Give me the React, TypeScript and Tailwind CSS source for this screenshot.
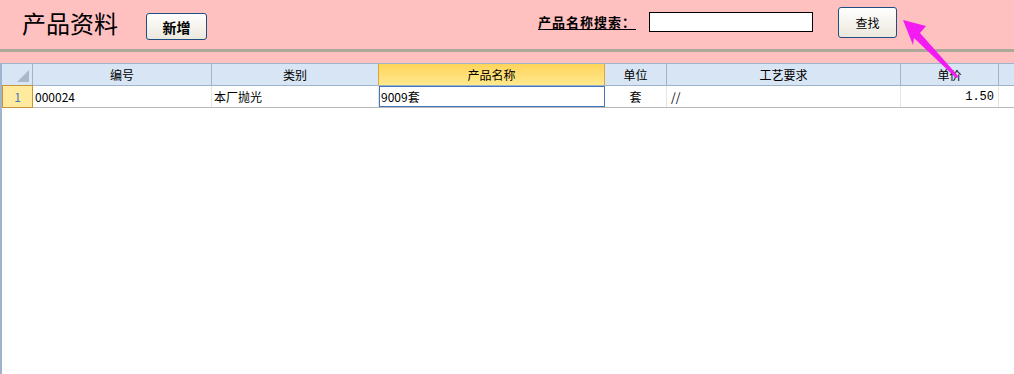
import React from "react";

const cols = [
  { name: "编号", w: 179 },
  { name: "类别", w: 167 },
  { name: "产品名称", w: 226, active: true },
  { name: "单位", w: 62 },
  { name: "工艺要求", w: 234 },
  { name: "单价", w: 98 },
];

export default function App() {
  const font = { fontFamily: '"Noto Sans CJK SC", "Liberation Sans", sans-serif' };
  return (
    <div className="relative w-[1014px] h-[374px] overflow-hidden bg-white" style={font}>
      {/* top pink area */}
      <div className="bg-[#ffc0c0]">
        <div className="h-[49px] flex items-start">
          <div className="ml-[22px] mt-[9px] w-[96px] shrink-0 text-[24px] leading-[28px] text-black">产品资料</div>
          <button className="ml-[28px] mt-[13px] w-[61px] h-[27px] shrink-0 rounded-[3px] border border-[#1f4f82] bg-gradient-to-b from-white to-[#ebe8dc] text-[14px] font-bold leading-none text-black">
            新增
          </button>
          <div className="ml-[331px] mt-[13px] w-[105px] shrink-0 text-[13px] font-bold underline underline-offset-2 text-black leading-[18px] tracking-[1px]">产品名称搜索：</div>
          <div className="ml-[6px] mt-[12px] w-[164px] h-[20px] shrink-0 bg-white border border-black" />
          <button className="ml-[25px] mt-[7px] w-[59px] h-[31px] shrink-0 rounded-[3px] border border-[#1f4f82] bg-gradient-to-b from-white to-[#ebe8dc] text-[12px] leading-none text-black">
            查找
          </button>
        </div>
        <div className="h-[3px] bg-[#aca79a]" />
        <div className="h-[11px]" />
      </div>

      {/* grid */}
      <div className="border-l-2 border-[#9fb3cb] h-[311px]">
        {/* header row */}
        <div className="flex h-[23px] bg-[#d7e5f4] border-t border-b border-[#9fb3cb]">
          <div className="relative w-[31px] shrink-0 border-r border-[#9fb3cb]">
            <div className="absolute right-[3px] bottom-[3px] w-0 h-0 border-l-[12px] border-l-transparent border-b-[12px] border-b-[#a9b8cb]" />
          </div>
          {cols.map((c) =>
            c.active ? (
              <div
                key={c.name}
                className="shrink-0 flex items-center justify-center text-[12px] text-black bg-gradient-to-b from-[#ffd45a] to-[#ffe98c] border-r border-l border-[#e0a43c] -ml-px"
                style={{ width: c.w + 1 }}
              >
                {c.name}
              </div>
            ) : (
              <div
                key={c.name}
                className="shrink-0 flex items-center justify-center text-[12px] text-black border-r border-[#9fb3cb]"
                style={{ width: c.w }}
              >
                {c.name}
              </div>
            )
          )}
          <div className="flex-1" />
        </div>
        {/* data row */}
        <div className="flex h-[22px] border-b border-[#b9b9b9] text-[12px] text-black">
          <div className="w-[31px] shrink-0 bg-[#ffea9d] border border-[#c89438] -mt-px flex items-center justify-center text-[#3a78c8] h-[23px]">
            1
          </div>
          <div className="w-[179px] shrink-0 border-r border-[#e8e5da] flex items-center pl-[2px]">000024</div>
          <div className="w-[167px] shrink-0 border-r border-[#e8e5da] flex items-center pl-[2px]">本厂抛光</div>
          <div className="w-[226px] shrink-0 border border-[#3e74c2] flex items-center pl-[1px]">9009套</div>
          <div className="w-[62px] shrink-0 border-r border-[#e8e5da] flex items-center justify-center">套</div>
          <div className="w-[234px] shrink-0 border-r border-[#e8e5da] flex items-center pl-[4px]">//</div>
          <div className="w-[98px] shrink-0 border-r border-[#e8e5da] flex items-center justify-end pr-[4px]" style={{ fontFamily: '"Liberation Mono", monospace' }}>1.50</div>
          <div className="flex-1" />
        </div>
      </div>

      {/* magenta arrow overlay */}
      <svg className="absolute left-0 top-0 pointer-events-none" width="1014" height="374">
        <polygon
          points="903,20 926,26 920,33 959,77 956,78 914,38 913,45"
          fill="#f21cf2"
        />
      </svg>
    </div>
  );
}
